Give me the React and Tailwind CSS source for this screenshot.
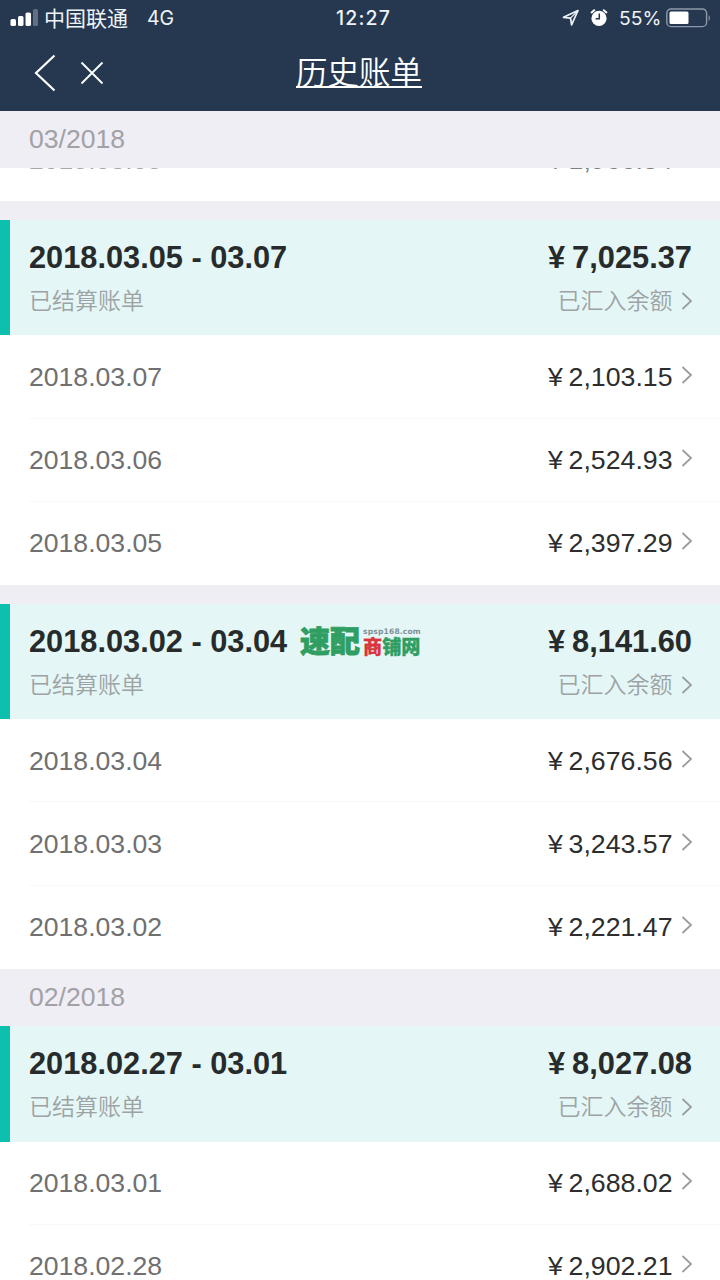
import React from "react";

const groups = [
  {
    range: "2018.03.05 - 03.07",
    total: "7,025.37",
    rows: [
      ["2018.03.07", "2,103.15"],
      ["2018.03.06", "2,524.93"],
      ["2018.03.05", "2,397.29"],
    ],
  },
  {
    range: "2018.03.02 - 03.04",
    total: "8,141.60",
    logo: true,
    rows: [
      ["2018.03.04", "2,676.56"],
      ["2018.03.03", "3,243.57"],
      ["2018.03.02", "2,221.47"],
    ],
  },
  {
    range: "2018.02.27 - 03.01",
    total: "8,027.08",
    rows: [
      ["2018.03.01", "2,688.02"],
      ["2018.02.28", "2,902.21"],
    ],
  },
];

function Chevron({ className }) {
  return (
    <svg className={className} width="12" height="18" viewBox="0 0 12 18" fill="none" stroke="#999da0" strokeWidth="1.8">
      <path d="M1.5 1 L10 9 L1.5 17" />
    </svg>
  );
}

function StatusBar() {
  return (
    <div className="flex h-9 items-center pr-2 pl-2.5 text-[19.5px] text-[#eef3f8]">
      <svg width="28" height="18" viewBox="0 0 28 18" className="shrink-0" fill="#fff">
        <rect x="0.5" y="10" width="5.5" height="7" rx="1.6" />
        <rect x="8" y="7" width="5.5" height="10" rx="1.6" />
        <rect x="15.5" y="3.5" width="5.5" height="13.5" rx="1.6" />
        <rect x="23" y="0" width="5" height="17" rx="1.6" opacity="0.28" />
      </svg>
      <span className="ml-1.5 w-[84px] pt-px text-[21px] leading-9 whitespace-nowrap">中国联通</span>
      <span className="ml-[19px] w-[30px] pt-[2px] font-['Inter'] text-[19.5px]">4G</span>
      <span className="ml-[159px] w-[56px] pt-[2px] font-['Inter'] text-[19.5px] font-medium tracking-[1.2px] whitespace-nowrap">12:27</span>
      <svg width="18" height="18" viewBox="0 0 18 18" className="ml-[170px] shrink-0" fill="none" stroke="#eef3f8" strokeWidth="1.7" strokeLinejoin="round">
        <path d="M16 1.5 L1.5 8.3 L8.5 9.1 L9.6 15.8 Z" />
        <path d="M16 1.5 L8.5 9.1" strokeWidth="1.2" />
      </svg>
      <svg width="18" height="19" viewBox="0 0 18 19" className="ml-[10px] shrink-0">
        <circle cx="9" cy="9.4" r="7.6" fill="#fff" />
        <path d="M1.6 3.4 L4.2 1.2 M16.4 3.4 L13.8 1.2" stroke="#fff" strokeWidth="2" strokeLinecap="round" />
        <path d="M9.3 4.6 V9.8 H5.6" stroke="#253850" strokeWidth="1.5" fill="none" />
      </svg>
      <span className="ml-[11px] w-[42px] pt-px font-['Inter'] text-[19.3px] tracking-[0px]">55%</span>
      <svg width="46" height="20" viewBox="0 0 46 20" className="ml-[5px] shrink-0">
        <rect x="0.8" y="1" width="39.8" height="17.6" rx="4.2" fill="none" stroke="#8d99a8" strokeWidth="1.4" />
        <rect x="3.5" y="3.5" width="19" height="12.5" rx="1.5" fill="#fff" />
        <path d="M42.7 7 Q45.3 10 42.7 13.2 Z" fill="#8d99a8" />
      </svg>
    </div>
  );
}

function NavBar() {
  return (
    <div className="grid h-[74px] grid-cols-[1fr_auto_1fr] items-center">
      <div className="flex items-center pl-[34px]">
        <svg width="22" height="38" viewBox="0 0 22 38" fill="none" stroke="#fff" strokeWidth="2.2">
          <path d="M20.5 1.5 L2 19 L20.5 36.5" />
        </svg>
        <svg className="ml-[24px]" width="24" height="24" viewBox="0 0 24 24" fill="none" stroke="#fff" strokeWidth="1.8">
          <path d="M1.5 1.5 L22.5 22.5 M22.5 1.5 L1.5 22.5" />
        </svg>
      </div>
      <h1 className="mr-[2px] h-[30px] border-b-2 border-white text-[31.5px] leading-[31px] font-[350] text-white">历史账单</h1>
      <div />
    </div>
  );
}

function MonthBar({ children }) {
  return (
    <div className="h-[57.5px] shrink-0 bg-[#efeef4] pl-[29px] text-[26.6px] leading-[57.4px] text-[#a2a1a6]">
      {children}
    </div>
  );
}

function Amount({ value, bold }) {
  return (
    <span className={bold ? "flex text-[30.8px] font-bold" : "flex text-[26.7px]"}>
      <span className={bold ? "w-[24px]" : "w-[20.5px]"}>¥</span>
      <span>{value}</span>
    </span>
  );
}

function Row({ date, amount, divider }) {
  return (
    <div className="h-[83.2px] w-full shrink-0 pl-[29px]">
      <div className={divider ? "flex h-full justify-between border-b border-[#f8f8f9] pt-[0.25px] pr-[27px] leading-[83.3px]" : "flex h-full justify-between pt-[0.25px] pr-[27px] leading-[83.3px]"}>
        <span className="text-[26.6px] text-[#707070]">{date}</span>
        <div className="flex text-[#2d2d2d]">
          <Amount value={amount} />
          <Chevron className="mt-[30px] ml-[8.5px]" />
        </div>
      </div>
    </div>
  );
}

function Logo() {
  return (
    <div className="absolute top-[22px] left-[290px] flex items-start text-[#2f9e62]">
      <span className="w-[60px] text-[30px] leading-[31px] font-black [-webkit-text-stroke:0.8px_#2f9e62]">速配</span>
      <div className="ml-[3px] flex w-[58px] flex-col">
        <span className="h-[12px] font-['DejaVu_Sans'] text-[7.6px] leading-[11px] font-bold tracking-[0.15px] text-[#7f9196]">spsp168.com</span>
        <span className="text-[19.2px] leading-[19px] font-black whitespace-nowrap [-webkit-text-stroke:0.3px]">
          <span className="text-[#d9353d]">商</span>铺网
        </span>
      </div>
    </div>
  );
}

function Group({ group }) {
  return (
    <section className="shrink-0">
      <div className="relative h-[115.3px] border-l-[10px] border-[#0dc0ad] bg-[#e4f7f6] pt-[19.6px] pr-[27px] pl-[19px]">
        <div className="flex justify-between pr-[1px] leading-[36px] text-[#272b2c]">
          <span className="text-[30.75px] font-bold">{group.range}</span>
          <Amount value={group.total} bold />
        </div>
        <div className="mt-[8.4px] flex justify-between text-[23px] leading-[34px] font-[350] text-[#9da3a4]">
          <span>已结算账单</span>
          <span className="flex items-center">
            已汇入余额
            <Chevron className="ml-[8.5px]" />
          </span>
        </div>
        {group.logo && <Logo />}
      </div>
      {group.rows.map(([date, amount], i) => (
        <Row key={date} date={date} amount={amount} divider={i < 2} />
      ))}
    </section>
  );
}

export default function App() {
  return (
    <div className="flex h-[1280px] w-[720px] flex-col overflow-hidden bg-white font-['Liberation_Sans','Noto_Sans_CJK_SC',sans-serif]">
      <header className="h-[110.6px] shrink-0 bg-[#253850]">
        <StatusBar />
        <NavBar />
      </header>
      <MonthBar>03/2018</MonthBar>
      <div className="flex h-[33px] shrink-0 items-end overflow-hidden">
        <div className="-mb-[0.4px] w-full opacity-60">
          <Row date="2018.03.08" amount="1,966.34" />
        </div>
      </div>
      <div className="h-[19px] shrink-0 bg-[#efeef4]" />
      <Group group={groups[0]} />
      <div className="h-[19px] shrink-0 bg-[#efeef4]" />
      <Group group={groups[1]} />
      <MonthBar>02/2018</MonthBar>
      <Group group={groups[2]} />
    </div>
  );
}
